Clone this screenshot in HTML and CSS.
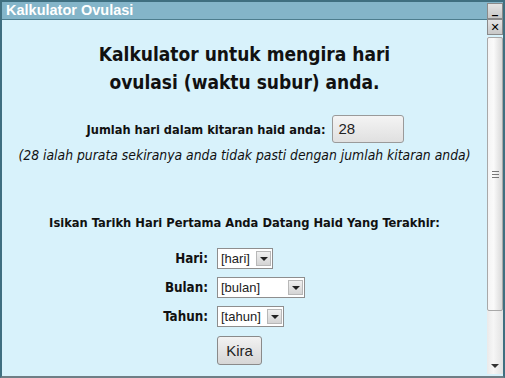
FILE: index.html
```html
<!DOCTYPE html>
<html>
<head>
<meta charset="utf-8">
<link rel="stylesheet" href="styles.css">
</head>
<body>
<div class="window">
  <div class="titlebar">
    <span class="title">Kalkulator Ovulasi</span>
    <span class="winbtn minbtn">_</span>
  </div>
  <div class="body">
    <div class="content">
      <h1 class="heading">Kalkulator untuk mengira hari<br>ovulasi (waktu subur) anda.</h1>
      <div class="cycle-row">
        <span class="lbl">Jumlah hari dalam kitaran haid anda:</span>
        <span class="textbox">28</span>
      </div>
      <p class="note">(28 ialah purata sekiranya anda tidak pasti dengan jumlah kitaran anda)</p>
      <p class="prompt">Isikan Tarikh Hari Pertama Anda Datang Haid Yang Terakhir:</p>
      <div class="form">
        <span class="flabel">Hari:</span>
        <span class="select w-hari"><span class="sval">[hari]</span><span class="sarrow"></span></span>
        <span class="flabel">Bulan:</span>
        <span class="select w-bulan"><span class="sval">[bulan]</span><span class="sarrow"></span></span>
        <span class="flabel">Tahun:</span>
        <span class="select w-tahun"><span class="sval">[tahun]</span><span class="sarrow"></span></span>
        <span></span>
        <span class="btn">Kira</span>
      </div>
    </div>
    <div class="side">
      <span class="winbtn closebtn">&#x2715;</span>
      <div class="scrollbar">
        <div class="thumb"><span class="grip"></span></div>
        <div class="track"></div>
        <div class="down"></div>
      </div>
    </div>
  </div>
</div>
</body>
</html>
```
FILE: styles.css
```css
* { box-sizing: border-box; }
html, body { margin: 0; padding: 0; }
body { width: 505px; height: 378px; overflow: hidden; background: #d8f2fb; }

.window {
  width: 505px;
  height: 378px;
  display: flex;
  flex-direction: column;
  border-left: 2px solid #3f6f80;
  border-top: 2px solid #3f6f80;
  border-right: 2px solid #3f6f80;
  border-bottom: 2px solid #6f7f86;
  background: #d8f2fb;
}

.titlebar {
  height: 18px;
  flex: none;
  display: flex;
  align-items: flex-start;
  justify-content: space-between;
  background: #84b5c9;
  border-bottom: 1px solid #4d7d8e;
}
.title {
  font-family: "Liberation Sans", Arial, sans-serif;
  font-weight: bold;
  font-size: 14.5px;
  color: #ffffff;
  padding-left: 4px;
  line-height: 17px;
}
.winbtn {
  width: 16px;
  height: 16px;
  flex: none;
  display: flex;
  align-items: center;
  justify-content: center;
  background: linear-gradient(#e4e4e4, #c8c8c8);
  border: 1px solid #8a8a8a;
  font-family: "DejaVu Sans", sans-serif;
  font-weight: bold;
  font-size: 12px;
  color: #000;
  line-height: 1;
}
.minbtn { margin-top: 1px; margin-right: 0; align-items: flex-end; padding-bottom: 3px; }
.closebtn { font-size: 11px; margin-top: -1px; }

.body {
  flex: 1;
  display: flex;
  min-height: 0;
}
.content {
  flex: 1;
  font-family: "DejaVu Sans Condensed", "DejaVu Sans", sans-serif;
  color: #111;
  text-align: center;
}
.heading {
  margin: 20px 0 0;
  font-size: 19px;
  font-weight: bold;
  line-height: 28px;
  color: #111;
}
.cycle-row {
  margin-top: 19px;
  display: flex;
  justify-content: center;
  align-items: center;
  gap: 7px;
  padding-left: 2px;
}
.lbl { font-weight: bold; font-size: 12.7px; }
.textbox {
  width: 72px;
  height: 28px;
  border: 1px solid #9a9a9a;
  border-radius: 3px;
  background: linear-gradient(#f4f4f4, #e0e0e0);
  text-align: left;
  padding-left: 5px;
  font-family: "Liberation Sans", Arial, sans-serif;
  font-size: 15px;
  line-height: 26px;
  color: #222;
}
.note {
  margin: 2px 0 0;
  font-style: italic;
  font-size: 13.8px;
  line-height: 20px;
}
.prompt {
  margin: 48px 0 0;
  font-weight: bold;
  font-size: 12.8px;
  line-height: 20px;
}
.form {
  margin-top: 15px;
  display: grid;
  grid-template-columns: 206px auto;
  column-gap: 9px;
  row-gap: 8px;
  justify-items: start;
  align-items: center;
}
.flabel {
  justify-self: end;
  font-weight: bold;
  font-size: 13.3px;
}
.select {
  height: 21px;
  display: flex;
  align-items: center;
  justify-content: space-between;
  background: #fff;
  border: 1px solid #8e8e8e;
  padding: 0 1px 0 3px;
  font-family: "Liberation Sans", Arial, sans-serif;
  font-size: 13px;
  color: #222;
}
.w-hari { width: 56px; }
.w-bulan { width: 88px; }
.w-tahun { width: 67px; }
.sarrow {
  width: 15px;
  height: 15px;
  background: linear-gradient(#f0f0f0, #d4d4d4);
  border: 1px solid #b8b8b8;
  position: relative;
}
.sarrow::after {
  content: "";
  position: absolute;
  left: 3px;
  top: 5px;
  border-left: 4px solid transparent;
  border-right: 4px solid transparent;
  border-top: 4px solid #222;
}
.btn {
  margin-top: 1px;
  width: 45px;
  height: 29px;
  border: 1px solid #8a8a8a;
  border-radius: 3px;
  background: linear-gradient(#f2f2f2, #d6d6d6);
  display: flex;
  align-items: center;
  justify-content: center;
  font-family: "Liberation Sans", Arial, sans-serif;
  font-size: 15px;
  color: #222;
}

.side {
  width: 16px;
  flex: none;
  display: flex;
  flex-direction: column;
  align-items: center;
}
.scrollbar {
  flex: 1;
  width: 16px;
  margin-top: 2px;
  margin-bottom: 2px;
  display: flex;
  flex-direction: column;
  background: linear-gradient(90deg, #eaeaea, #f6f6f6 40%, #e2e2e2);
}
.thumb {
  height: 274px;
  flex: none;
  border: 1px solid #a8a8a8;
  border-radius: 2px;
  background: linear-gradient(90deg, #f4f4f4, #fafafa 40%, #d9d9d9);
  display: flex;
  align-items: center;
  justify-content: center;
}
.grip {
  width: 7px;
  height: 7px;
  border-top: 1px solid #777;
  border-bottom: 1px solid #777;
  position: relative;
}
.grip::after {
  content: "";
  position: absolute;
  left: 0; right: 0; top: 2px;
  border-top: 1px solid #777;
}
.track { flex: 1; }
.down {
  height: 14px;
  flex: none;
  position: relative;
}
.down::after {
  content: "";
  position: absolute;
  left: 4px;
  top: 4px;
  border-left: 4px solid transparent;
  border-right: 4px solid transparent;
  border-top: 4px solid #333;
}
```
